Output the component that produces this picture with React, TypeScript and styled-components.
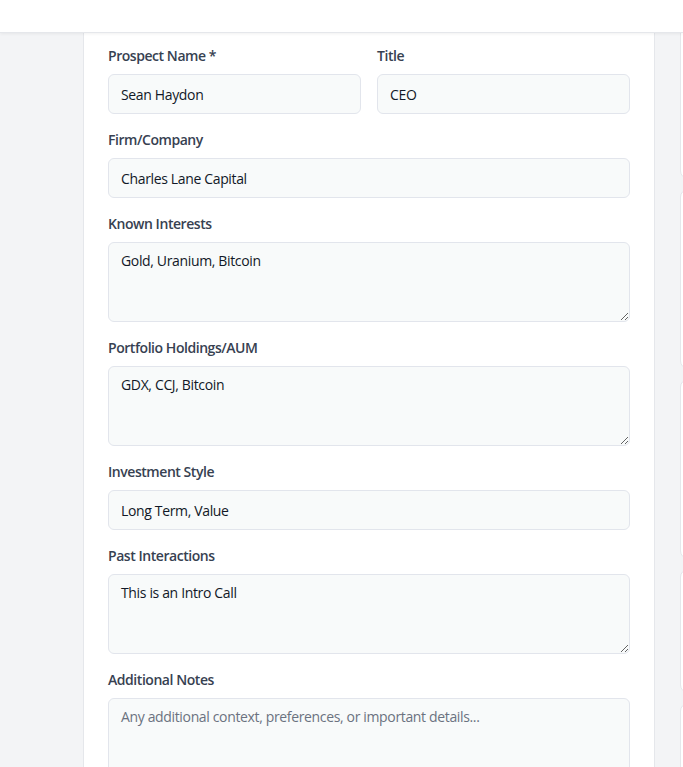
import React from "react";
import styled, { createGlobalStyle } from "styled-components";

const Global = createGlobalStyle`
  html, body { margin: 0; padding: 0; background: #f3f4f6; }
  body { font-family: "Open Sans", "Noto Sans", sans-serif; overflow: hidden; }
  * { box-sizing: border-box; }
`;

const Page = styled.div`
  height: 767px;
  display: flex;
  flex-direction: column;
  overflow: hidden;
`;

const Header = styled.header`
  height: 33px;
  flex: none;
  background: #ffffff;
  border-bottom: 1px solid #e5e7eb;
  box-shadow: 0 1px 3px rgba(0, 0, 0, 0.06);
  position: relative;
  z-index: 1;
`;

const Main = styled.main`
  flex: 1;
  display: flex;
  gap: 25px;
  padding-left: 83px;
  overflow: hidden;
`;

const Card = styled.section`
  width: 572px;
  flex: none;
  background: #ffffff;
  border-left: 1px solid #e5e7eb;
  border-right: 1px solid #e5e7eb;
  padding: 13px 24px 0 24px;
  display: flex;
  flex-direction: column;
  gap: 16px;
`;

const SideColumn = styled.aside`
  flex: none;
  width: 300px;
  display: flex;
  flex-direction: column;
  gap: 10px;
  margin-top: -30px;
`;

const SideCard = styled.div<{ $h: number }>`
  height: ${(p) => p.$h}px;
  background: #ffffff;
  border: 1px solid #e5e7eb;
  border-radius: 8px;
  flex: none;
`;

const Row = styled.div`
  display: grid;
  grid-template-columns: 1fr 1fr;
  gap: 16px;
`;

const Field = styled.div`
  display: flex;
  flex-direction: column;
  gap: 8px;
`;

const Label = styled.label`
  font-size: 14px;
  line-height: 20px;
  font-weight: 600;
  letter-spacing: -0.45px;
  color: #374151;
`;

const fieldBase = `
  width: 100%;
  font-family: "Open Sans", "Noto Sans", sans-serif;
  font-size: 14px;
  line-height: 20px;
  letter-spacing: -0.35px;
  color: #111827;
  background: #f8fafa;
  border: 1px solid #e2e5ec;
  border-radius: 6px;
  padding: 8px 12px;
  outline: none;
  margin: 0;
  &::placeholder { color: #6b7280; }
`;

const Input = styled.input`
  ${fieldBase}
  height: 40px;
`;

const TextArea = styled.textarea`
  ${fieldBase}
  height: 80px;
  resize: vertical;
  display: block;
`;

export default function App() {
  return (
    <>
      <Global />
      <Page>
        <Header />
        <Main>
          <Card>
            <Row>
              <Field>
                <Label>Prospect Name *</Label>
                <Input defaultValue="Sean Haydon" />
              </Field>
              <Field>
                <Label>Title</Label>
                <Input defaultValue="CEO" />
              </Field>
            </Row>
            <Field>
              <Label>Firm/Company</Label>
              <Input defaultValue="Charles Lane Capital" />
            </Field>
            <Field>
              <Label>Known Interests</Label>
              <TextArea defaultValue="Gold, Uranium, Bitcoin" />
            </Field>
            <Field>
              <Label>Portfolio Holdings/AUM</Label>
              <TextArea defaultValue="GDX, CCJ, Bitcoin" />
            </Field>
            <Field>
              <Label>Investment Style</Label>
              <Input defaultValue="Long Term, Value" />
            </Field>
            <Field>
              <Label>Past Interactions</Label>
              <TextArea defaultValue="This is an Intro Call" />
            </Field>
            <Field>
              <Label>Additional Notes</Label>
              <TextArea placeholder="Any additional context, preferences, or important details..." />
            </Field>
          </Card>
          <SideColumn>
            <SideCard $h={176} />
            <SideCard $h={180} />
            <SideCard $h={180} />
            <SideCard $h={124} />
            <SideCard $h={200} />
          </SideColumn>
        </Main>
      </Page>
    </>
  );
}
